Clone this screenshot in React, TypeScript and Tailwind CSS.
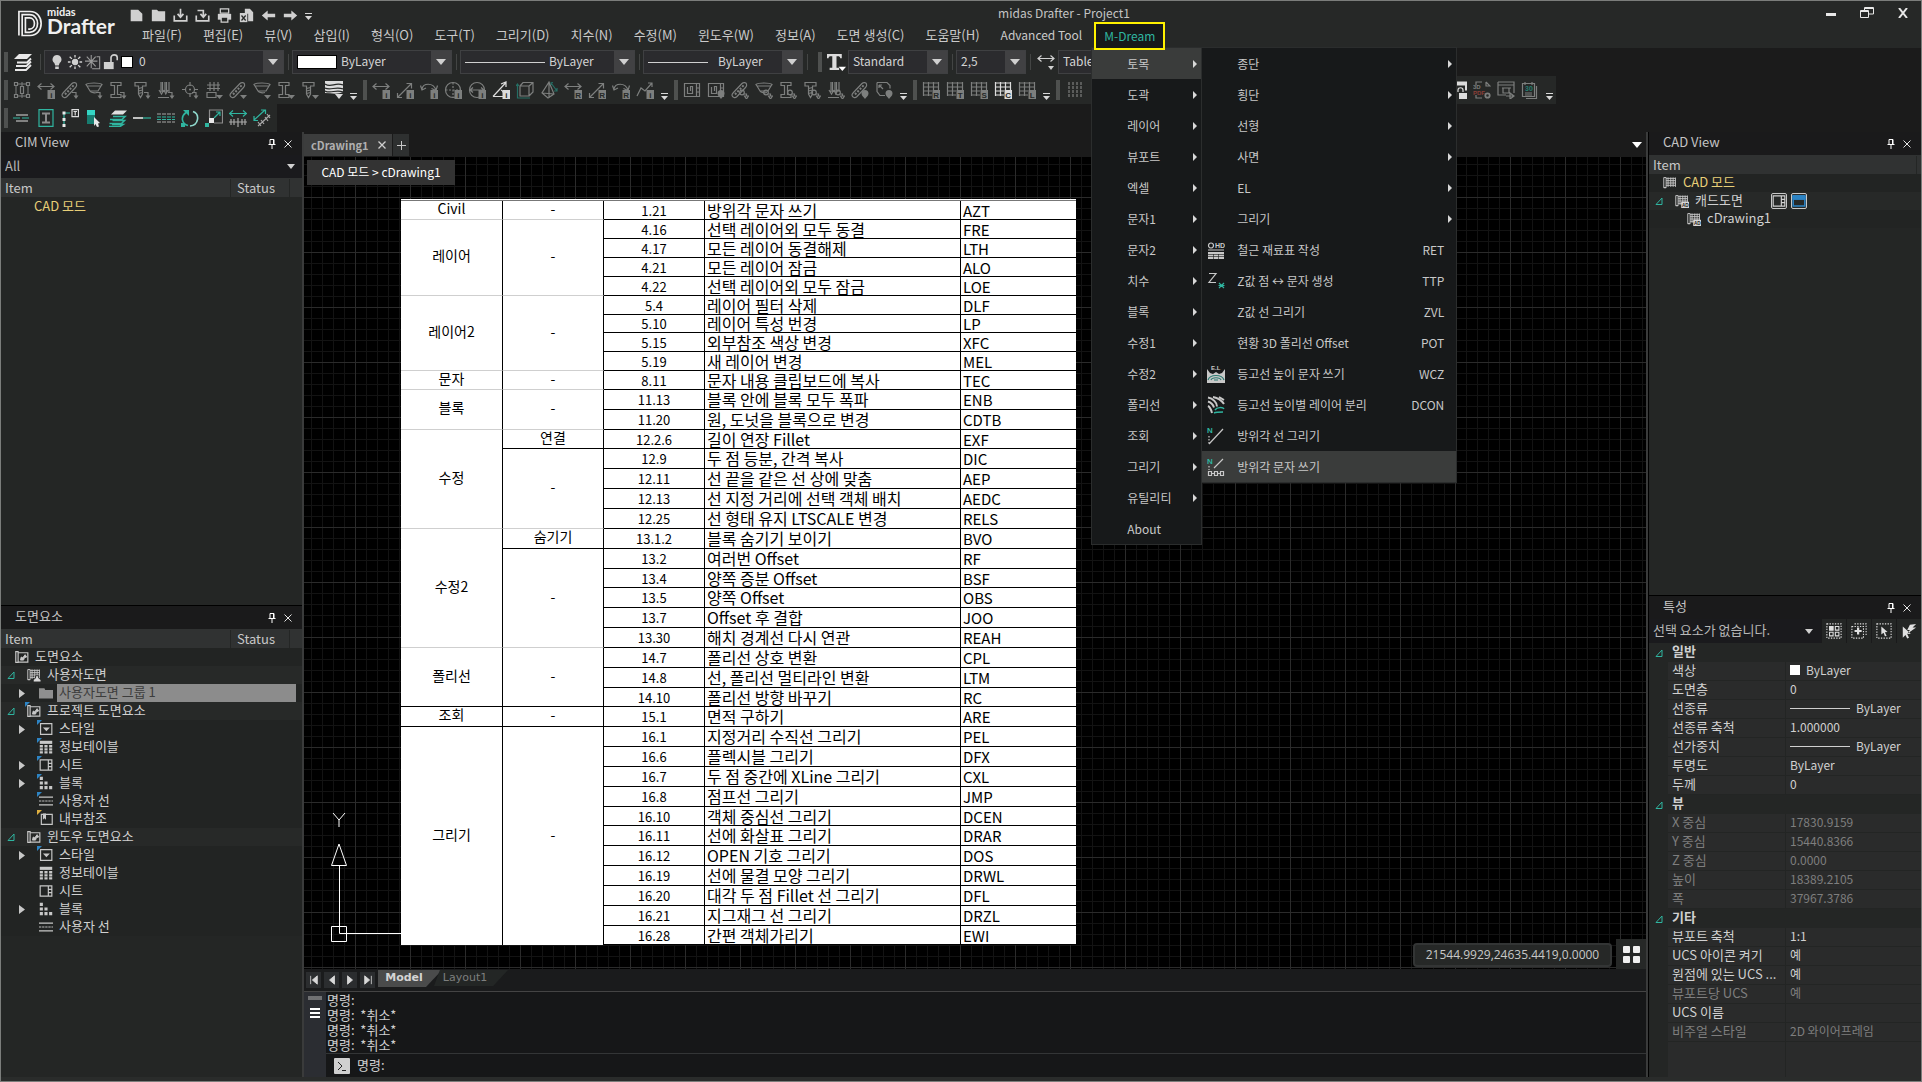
import type { ReactNode } from 'react';
import { clsx } from 'clsx';

/* ---------- icon parts (18 x 18 grid) ---------- */

function Icon({ children, size = 18, className }: { children: ReactNode; size?: number; className?: string }) {
  return (
    <svg
      width={size}
      height={size}
      viewBox="0 0 18 18"
      fill="none"
      stroke="currentColor"
      strokeWidth="1.2"
      className={clsx('shrink-0', className)}
      aria-hidden="true"
    >
      {children}
    </svg>
  );
}

const TEAL = '#2fb5a0';

// modifiers, drawn in the lower right corner
const Turn = () => (
  <g>
    <path d="M11 11.500h4v4" />
    <path d="M12.500 14.500h5l-2.500 3.500z" fill="currentColor" stroke="none" />
  </g>
);
const Tri = () => <path d="M11 14h7l-3.500 4z" fill="currentColor" stroke="none" />;
const Badge = ({ t }: { t: string }) => (
  <g>
    <rect x="10.500" y="9" width="7.500" height="9" fill="currentColor" stroke="none" />
    <text x="14.250" y="16.500" textAnchor="middle" fontSize="8" fontWeight="700" fontFamily="Liberation Sans" fill="#262827" stroke="none">
      {t}
    </text>
  </g>
);
const Drop = () => <path d="M14 18c-1-2-3.500-3-3.500-5.500a3.500 3.500 0 0 1 7 0c0 2.500-2.500 3.500-3.500 5.500z" fill="currentColor" stroke="none" />;
const Ring = () => (
  <g>
    <circle cx="11" cy="11.500" r="2.300" />
    <path d="M13 13h2.500v2.500M13.500 15h4l-2 3z" />
  </g>
);

// bases
const Frame = () => (
  <g>
    <path d="M1 3h16M1 15h16M3 1v16M9 1v16M15 1v16" strokeWidth="1" />
    <path d="M1.500 1.500h3v3h-3zM7.500 5.500h3v7h-3zM13.500 1.500h3v3h-3zM1.500 13.500h3v3h-3zM13.500 13.500h3v3h-3z" fill="#262827" />
  </g>
);
const Dim = () => <path d="M1 5.500h16M4.500 2.500L1 5.500l3.500 3M13.500 2.500l3.500 3-3.500 3" />;
const Diag = () => <path d="M2 16L15 3M10.500 2.500H15.500V7.500M1.500 12v4.500H6" />;
const Arc = () => <path d="M2 8c1-6 11-7 14 1M.5 4.500L2 9l4-2M17.500 4.500L16 9.500l-4.500-2" />;
const Rebar = () => (
  <g>
    <path d="M3 16.500c-2.500-1-2.500-3-1-4.500L11 2.500c1.500-1.500 4-1 4.500.5s0 2.500-1 3.500L6 15.500c-1 1-2 1.500-3 1z" />
    <path d="M4 13.500l9-9.500" strokeDasharray="2 1.500" strokeWidth="2" />
  </g>
);
const Bowl = () => <path d="M1 3.500c2-2 14-2 16 0l-1 1.500H2zM2 5l3 5h8l3-5M5 10c1 2 5 2 7 1.500" />;
const IBeam = () => <path d="M2 1.500h10v3H8.500v9H12v3H2v-3h3.500v-9H2z" />;
const TBeam = () => <path d="M2 1.500h11v3.500H9.500v8L7.500 16.500 5.500 13V5H2zM5.500 7.500l4-1M5.500 10l4-1M5.500 12.500l4-1" />;
const Piles = () => <path d="M4 1v10M8 1v10M12 1v10M5.500 1v10M9.500 1v10M2 9l2.500 4L7 9M7 9l1.800 4L11 9M1 16.500h11" />;
const Target = () => <path d="M9 1v4M9 12v4M1 8.500h4M13 8.500h4M9 4a4.500 4.500 0 1 1 0 9 4.500 4.500 0 0 1 0-9zM9 7.500v2M8 8.500h2" />;
const Mesh = () => <path d="M2 4h13M2 7.500h13M5 1v9M9 1v9M13 1v9M2 11.500h9v5H2z" />;
const Waves = () => (
  <g stroke="none">
    <path d="M0 0h18v11c-6 3-12 1-18 1z" fill="currentColor" />
    <path d="M0 3c6 4 10-2 18 1M0 7c5 3 11-2 18 1M0 10c6 3 11-2 18 1" stroke="#262827" />
  </g>
);
const Disc = ({ dashed }: { dashed?: boolean }) => (
  <g>
    <circle cx="9" cy="9" r="7.500" />
    <path d="M1.500 9h15M9 1.500v15" strokeDasharray={dashed ? '2 1.500' : undefined} />
  </g>
);
const Clip = () => <path d="M1.500 2.500h12v13h-12zM13.500 2.500h3v13h-3M4.500 6v6.500h5v-7h-2v4.500M13.500 7h3M13.500 11h3" />;
const Grid = () => <path d="M1 2h16M1 6h16M1 10h9M1 14h9M1.500 1v14M6.500 1v14M11.500 1v8M16.500 1v8" />;

const libraryIcons: ReactNode[] = [
  <Frame />,
  <><Dim /><Badge t="i" /></>,
  <><Rebar /><Turn /></>,
  <><Bowl /><Turn /></>,
  <><IBeam /><Turn /></>,
  <><TBeam /><Turn /></>,
  <><Piles /><Turn /></>,
  <><Target /><Turn /></>,
  <><Mesh /><Tri /></>,
  <><Rebar /><Tri /></>,
  <><Bowl /><Tri /></>,
  <><IBeam /><Tri /></>,
  <><TBeam /><Tri /></>,
];

const dimensionIcons: { art: ReactNode; lit?: boolean }[] = [
  { art: <><Dim /><Badge t="i" /></> },
  { art: <><Diag /><Badge t="i" /></> },
  { art: <><Arc /><Badge t="i" /></> },
  { art: <><Disc dashed /><Badge t="i" /></> },
  { art: <><circle cx="9" cy="9" r="7.500" /><path d="M2 9h14M5 6.500L2 9l3 2.500M13 6.500L16 9l-3 2.500" /><Badge t="i" /></> },
  { art: <><path d="M1 15.500h15M1 15.500L14 1.500M9 3l5-2v5M9 9c2 1 3 3 3 6" /><Badge t="i" /></>, lit: true },
  { art: <><path d="M4 5h9v10H4zM4 5l3-3.500h10V11l-4 4M13 5l4-3.500" /><path d="M1.500 3v14H14M0 5l1.500-2L3 5" stroke="#256e64" /></> },
  { art: <><path d="M9 1L2 12l6 5 6-4zM9 1v16M2 12l12 1" /><path d="M11 2l6 8M13 1.500l-2 .5.500 2M17 7v3h-3" stroke="#256e64" /></> },
  { art: <><Dim /><Badge t="R" /></> },
  { art: <><Diag /><Badge t="R" /></> },
  { art: <><Arc /><Badge t="R" /></> },
  { art: <><path d="M1 15l4-8 4 3 7-8M12 2h4v4" /><Badge t="i" /></> },
];

const placeIcons: ReactNode[] = [
  <Clip />,
  <><Clip /><Drop /></>,
  <><Rebar /><Ring /></>,
  <><Bowl /><Ring /></>,
  <><IBeam /><Ring /></>,
  <><TBeam /><Ring /></>,
  <><Piles /><Ring /></>,
  <><Rebar /><Drop /></>,
  <><path d="M2 1.500h10l3 3v3M2 1.500v9l3 4h5M4 4l4 4M4 4v3M4 4h3" /><Drop /></>,
];

const editIcons: ReactNode[] = [
  <><path d="M3 6h12M3 12h12" /><path d="M0 9h18" stroke={TEAL} strokeDasharray="7 2" /></>,
  <><path d="M2 .6h14v16.800H2z" stroke={TEAL} /><path d="M5 4.500h8M5 13.500h8M9 4.500v9" strokeWidth="2" stroke="#8c8c8c" /></>,
  <><path d="M3 16V4h6" stroke={TEAL} /><path d="M1.500 2.500h3v3h-3zM1.500 9h3v3h-3zM1.500 15h3v3h-3z" fill="#e8e8e8" stroke="none" /><path d="M11 .6h6.500v7H11zM12.500 2.500h3.500M14.200 2.500v4" /></>,
  <><path d="M2 1h8v5H2z" fill="#34d6c4" stroke="none" /><path d="M2 6h8v9H2z" fill="#177d70" stroke="none" /><path d="M9 8l6 6-2 .5 1 3-2 .5-1.500-3L9 17z" fill="#e8e8e8" stroke="none" /></>,
  <><path d="M6 1.500h12l-4 4H2z" fill="#e0e0e0" stroke="none" /><path d="M4 7.500h12l-3 3H1M3.500 11.500h12l-3 3H.5M3 15.500h11l-3 2H0" stroke={TEAL} strokeWidth="1.600" /></>,
  <><path d="M0 9h10" strokeWidth="1.600" stroke="#e8e8e8" /><path d="M10 9h8" stroke={TEAL} /></>,
  <><path d="M0 5h18M0 13h18" strokeDasharray="4 1" stroke="#a8a8a8" /><path d="M0 8h18M0 10.500h18" stroke={TEAL} strokeDasharray="4 1" /></>,
  <><path d="M5 3.500C-1 8 1 15 7 16.500" stroke={TEAL} strokeWidth="1.600" /><path d="M9 17c9-1 10-12 3-14.500" stroke="#8fd8cc" strokeWidth="1.600" /><path d="M2 1h6v6z" fill={TEAL} stroke="none" /><path d="M0 14h4v4H0z" fill={TEAL} stroke="none" /></>,
  <><path d="M4.500 9V1h13v13H9" stroke="#8c8c8c" /><path d="M9 9l6-6M11 3h4v4" stroke={TEAL} /><path d="M4 9h5v5H4z" fill="#e8e8e8" stroke="none" /><path d="M0 14h4v4H0z" fill={TEAL} stroke="none" /></>,
  <><path d="M0 4.500h18M4 1.500L.5 4.500l3.500 3M14 1.500l3.500 3-3.500 3" stroke={TEAL} /><path d="M0 13h18M2 10v6M5 10v6M9 9v9M13 10v6M16 10v6" stroke="#a8a8a8" /></>,
  <><path d="M1 11L12 1M8 1h4.500v4M1 7v4.500h4" stroke={TEAL} /><path d="M5 17L17 6M5 13l3 4M8 11l3 4M12 8l3 4M14 5l3 4" stroke="#a8a8a8" /></>,
];

/* ---------- small widgets ---------- */

function Grip() {
  return (
    <span className="flex w-[9px] shrink-0 items-center justify-center">
      <span className="h-5 w-1 bg-[radial-gradient(#6b6d6c_0.5px,transparent_1px)] bg-[length:2px_2px]" />
    </span>
  );
}

function More() {
  return (
    <button className="flex w-3.5 shrink-0 items-end justify-center self-stretch pb-1" aria-label="More tools">
      <svg width="7" height="7" viewBox="0 0 7 7" fill="#d8d8d8" aria-hidden="true">
        <path d="M0 0h7v1H0zM0 3h7L3.500 7z" />
      </svg>
    </button>
  );
}

function Tool({ children, lit, label = 'Tool' }: { children: ReactNode; lit?: boolean; label?: string }) {
  return (
    <button
      aria-label={label}
      className={clsx('flex w-6 shrink-0 items-center justify-center', lit ? 'text-[#dcdcdc]' : 'text-[#7d7f7e]')}
    >
      <Icon>{children}</Icon>
    </button>
  );
}

function Caret({ className }: { className?: string }) {
  return (
    <svg width="10" height="6" viewBox="0 0 10 6" className={clsx('shrink-0 fill-[#d0d0d0]', className)} aria-hidden="true">
      <path d="M0 0h10L5 6z" />
    </svg>
  );
}

function Combo({ label, value, lead, className }: { label: string; value: string; lead?: ReactNode; className: string }) {
  return (
    <label className={clsx('flex h-6 shrink-0 items-center border border-[#3f4042] bg-[#2b2b2e]', className)}>
      {lead}
      <select aria-label={label} className="min-w-0 flex-1 appearance-none bg-transparent px-1 pb-0.5 text-xs text-[#d4d4d4] outline-none">
        <option>{value}</option>
      </select>
      <span className="flex h-full w-5 items-center justify-center bg-[#414143]">
        <Caret />
      </span>
    </label>
  );
}

function Separator() {
  return (
    <span className="flex w-2 shrink-0 justify-center py-1">
      <span className="h-4 w-px bg-[#434544]" />
    </span>
  );
}

function PanelTitle({ children }: { children: ReactNode }) {
  return (
    <div className="flex h-[23px] shrink-0 items-center bg-[#1a1a1b] pr-1.5 pl-3.5 text-[13px] leading-4 text-[#c4c4c4]">
      <h2 className="flex-1 pb-1">{children}</h2>
      <button aria-label="Pin" className="flex w-4 justify-center">
        <svg width="8" height="10" viewBox="0 0 8 10" fill="none" stroke="#fff" aria-hidden="true">
          <path d="M2 .5h4v5H2zM5.500 .5v5M.5 5.500h7M4 6v4" />
        </svg>
      </button>
      <button aria-label="Close" className="flex w-4 justify-center">
        <svg width="8" height="8" viewBox="0 0 8 8" stroke="#e4e4e4" aria-hidden="true">
          <path d="M.5 .5l7 7M7.500 .5l-7 7" />
        </svg>
      </button>
    </div>
  );
}

/* ---------- header ---------- */

const menus = [
  '파일(F)', '편집(E)', '뷰(V)', '삽입(I)', '형식(O)', '도구(T)', '그리기(D)', '치수(N)', '수정(M)',
  '윈도우(W)', '정보(A)', '도면 생성(C)', '도움말(H)',
];

const quickIcons: { label: string; art: ReactNode }[] = [
  { label: 'New', art: <path d="M2 2h9l5 5v9H2z" fill="currentColor" stroke="none" /> },
  { label: 'Open', art: <path d="M1 2h6l2 2h8v12H1z" fill="currentColor" stroke="none" /> },
  { label: 'Save', art: <path d="M1.500 9v6.500h15V9M9 1v9M5.500 7L9 11l3.500-4" strokeWidth="2" /> },
  { label: 'Save as', art: <path d="M1.500 9v6.500h15V9M3 3h7v7M6.500 7l3.500 4 3.500-4" strokeWidth="2" /> },
  { label: 'Print', art: <><path d="M4 1h10v5H4z" strokeWidth="1.500" /><path d="M1 7h16v7H1z" fill="currentColor" stroke="none" /><path d="M5 11h8v6H5z" fill="#262827" strokeWidth="1.500" /></> },
  { label: 'Export', art: <><path d="M7 1h6l4 4v11H11V7H7z" fill="currentColor" stroke="none" /><path d="M1 6h9v11H1z" fill="currentColor" stroke="none" /><path d="M3 9l5 6M8 9l-5 6" stroke="#262827" strokeWidth="1.500" /></> },
  { label: 'Undo', art: <path d="M1 9l7-6v4h9v4H8v4z" fill="currentColor" stroke="none" /> },
  { label: 'Redo', art: <path d="M17 9l-7-6v4H1v4h9v4z" fill="currentColor" stroke="none" /> },
];

function Logo() {
  return (
    <div className="flex w-[130px] shrink-0 items-start pt-1.5 pl-[17px]">
      <svg width="25" height="27" viewBox="0 0 27 28" fill="none" stroke="#f0f0f0" strokeWidth="1.800" className="mt-[3px]" aria-hidden="true">
        <path d="M1 27V1h12c16 0 16 26 0 26H4.500V4.500h8c11.500 0 11.500 19 0 19H8V8h4.500c7 0 7 12 0 12H11" />
      </svg>
      <div className="ml-1 flex flex-col font-['Lato',sans-serif] text-[#f0f0f0]">
        <span className="text-[11px] leading-[10px] font-bold">midas</span>
        <span className="text-[21px] leading-[18px] font-bold">Drafter</span>
      </div>
    </div>
  );
}

const mainMenu = ['토목', '도곽', '레이어', '뷰포트', '엑셀', '문자1', '문자2', '치수', '블록', '수정1', '수정2', '폴리선', '조회', '그리기', '유틸리티', 'About'];

const northMark = (
  <text x="0" y="6" fontSize="8" fontWeight="700" fontFamily="Liberation Sans" fill={TEAL} stroke="none">N</text>
);

const subMenu: { text: string; key?: string; icon?: ReactNode; sub?: boolean }[] = [
  { text: '종단', sub: true },
  { text: '횡단', sub: true },
  { text: '선형', sub: true },
  { text: '사면', sub: true },
  { text: 'EL', sub: true },
  { text: '그리기', sub: true },
  {
    text: '철근 재료표 작성',
    key: 'RET',
    icon: (
      <>
        <circle cx="4" cy="4.500" r="2.500" />
        <text x="8" y="7" fontSize="7" fontWeight="700" fontFamily="Liberation Sans" fill="currentColor" stroke="none">HD</text>
        <path d="M1 9h16" strokeWidth="1" />
        <path d="M1 11h16v7H1z" fill="currentColor" stroke="none" />
        <path d="M1 13.500h16M1 15.500h16M6.500 13v5M11.500 13v5" stroke="#17191a" strokeWidth=".6" />
      </>
    ),
  },
  { text: 'Z값 점 ↔ 문자 생성', key: 'TTP', icon: <><path d="M2 1.500h7L2 10.500h7" /><path d="M12 11l5 5M17 11l-5 5M11.500 13.500h6" stroke={TEAL} /></> },
  { text: 'Z값 선 그리기', key: 'ZVL' },
  { text: '현황 3D 폴리선 Offset', key: 'POT' },
  {
    text: '등고선 높이 문자 쓰기',
    key: 'WCZ',
    icon: (
      <>
        <text x="4" y="5" fontSize="6" fontWeight="700" fontFamily="Liberation Sans" fill="currentColor" stroke="none">E.L</text>
        <path d="M0 4l3 4 3 1 3-2 3 2 3-1 3-4v14H0z" fill="currentColor" stroke="none" />
        <path d="M1 15c2-6 14-6 16 0M4 15c1-3 9-3 10 0M7 15h4" stroke="#2b7a70" />
      </>
    ),
  },
  {
    text: '등고선 높이별 레이어 분리',
    key: 'DCON',
    icon: (
      <>
        <path d="M1 1.500c5 1 9 5 9 9M1 5.500c3 1 5 3 6 6M1 10c2 1 3 3 4 7M6 1c5 1 9 4 11 7M12 1l5 3" strokeWidth="2" />
        <path d="M8 14c2-3 8-3 9-1M7 17c2-1 7-1 9-1" stroke={TEAL} strokeWidth="1.500" />
      </>
    ),
  },
  { text: '방위각 선 그리기', icon: <>{northMark}<path d="M2 9v8" strokeDasharray="1.500 1.500" /><path d="M2 17L16 2" /></> },
  { text: '방위각 문자 쓰기', icon: <>{northMark}<path d="M2 8v4" strokeDasharray="1.500 1.500" /><path d="M7 10l9-9M1.500 13.500h3v4h-3zM7.500 13.500h3v4h-3zM13.500 13.500h3v4h-3zM4.500 15.500h3M10.500 15.500h3" /></> },
];

function SubArrow() {
  return (
    <svg width="4" height="8" viewBox="0 0 4 8" fill="#d8d8d8" aria-hidden="true">
      <path d="M0 0l4 4-4 4z" />
    </svg>
  );
}

function DreamMenu() {
  return (
    <div className="relative ml-0.5">
      <button className="relative z-20 flex h-7 w-[71px] items-center justify-center border-2 border-[#fff100] bg-[#17191a] text-xs text-[#2fb5a0]">
        M-Dream
      </button>
      <div className="absolute top-[25px] left-[-3px] z-10 w-[111px] border border-[#2b2d2d] bg-[#17191a] text-xs text-[#c8c8c8]">
        <ul>
          {mainMenu.map((m, i) => (
            <li key={m}>
              <button className={clsx('flex h-[31px] w-full items-center pr-1 pl-[35px] text-left', i === 0 && 'bg-[#3a3c3b]')}>
                <span className="flex-1">{m}</span>
                {m !== 'About' && <SubArrow />}
              </button>
            </li>
          ))}
        </ul>
        <ul className="absolute -top-px left-full w-[256px] border border-[#2b2d2d] bg-[#17191a]">
          {subMenu.map((m, i) => (
            <li key={m.text}>
              <button className={clsx('flex h-[31px] w-full items-center pr-1 text-left', i === subMenu.length - 1 && 'bg-[#3a3c3b]')}>
                <span className="flex w-[35px] shrink-0 pl-[5px]">{m.icon && <Icon>{m.icon}</Icon>}</span>
                <span className="flex-1">{m.text}</span>
                {m.key && <span className="pr-2">{m.key}</span>}
                {m.sub && <SubArrow />}
              </button>
            </li>
          ))}
        </ul>
      </div>
    </div>
  );
}

function Header() {
  return (
    <header className="flex h-[47px] shrink-0 bg-[#262827]">
      <Logo />
      <div className="flex min-w-0 flex-1 flex-col">
        <div className="flex h-[23px] items-center">
          <div className="-ml-1.5 flex items-center self-stretch text-[#d0d0d0]">
            {quickIcons.map((q) => (
              <button key={q.label} aria-label={q.label} className="flex w-[22px] justify-center pt-1.5">
                <Icon size={15}>{q.art}</Icon>
              </button>
            ))}
            <More />
          </div>
          <h1 className="flex-1 text-center text-xs text-[#c4c4c4]">midas Drafter - Project1</h1>
          <div className="flex text-[#e8e8e8]">
            <button aria-label="Minimize" className="flex w-9 items-center justify-center">
              <svg width="10" height="10" viewBox="0 0 10 10" aria-hidden="true"><path d="M0 5h10v3H0z" fill="currentColor" /></svg>
            </button>
            <button aria-label="Restore" className="flex w-9 items-center justify-center">
              <svg width="14" height="11" viewBox="0 0 14 11" fill="none" stroke="currentColor" aria-hidden="true">
                <path d="M.5 3.500h8v7h-8zM.5 4.500h8M4.500 3V.5h9v6.500H9M4.500 1.500h9" />
              </svg>
            </button>
            <button aria-label="Close" className="flex w-9 items-center justify-center">
              <svg width="10" height="10" viewBox="0 0 10 10" stroke="currentColor" strokeWidth="2" aria-hidden="true"><path d="M1 0l8 10M9 0L1 10" /></svg>
            </button>
          </div>
        </div>
        <nav className="flex h-6 items-center text-[13px] leading-4 text-[#cacaca]">
          {menus.map((m) => (
            <button key={m} className="pr-2.5 pb-0.5 pl-[11px] whitespace-nowrap">
              {m}
            </button>
          ))}
          <button className="pr-2.5 pb-0.5 pl-[11px] text-xs whitespace-nowrap">Advanced Tool</button>
          <DreamMenu />
        </nav>
      </div>
    </header>
  );
}

/* ---------- toolbars ---------- */

function PropertyBar() {
  return (
    <div className="flex h-7 w-fit items-center bg-[#262827]">
      <Grip />
      <button aria-label="Layers" className="mx-px flex w-6 justify-center text-[#e8e8e8]">
        <Icon>
          <path d="M5 1h13l-5 5H0z" fill="currentColor" stroke="none" />
          <path d="M3 9.500h10l4-4M2 13h10.500l4.500-4.500M1 17h11l5-5" strokeWidth="1.800" />
        </Icon>
      </button>
      <Separator />
      <Combo
        label="Layer"
        value="0"
        className="w-60"
        lead={
          <span className="flex items-center gap-0.5 pl-1 text-[#d0d0d0]">
            <Icon size={16}><path d="M9 1a5 5 0 0 1 3 9l-1 3H7l-1-3a5 5 0 0 1 3-9zM7 14h4v3H7z" fill="currentColor" stroke="none" /></Icon>
            <Icon size={16}><circle cx="9" cy="9" r="3" fill="currentColor" /><path d="M9 1v3M9 14v3M1 9h3M14 9h3M3 3l2.500 2.500M12.500 12.500L15 15M3 15l2.500-2.500M12.500 5.500L15 3" strokeWidth="1.500" /></Icon>
            <Icon size={16} className="text-[#9a9a9a]"><path d="M7 1v15M0 8h14M2 3l10 11M12 3L2 14M13 3h3.500v13.500H8" /></Icon>
            <Icon size={16}><path d="M1 9h11v8H1z" fill="currentColor" stroke="none" /><path d="M9 9V4c0-4 7-4 7 0v3" strokeWidth="1.800" /></Icon>
            <span className="mr-0.5 h-3 w-3 border border-black bg-white" />
          </span>
        }
      />
      <Separator />
      <Combo label="Color" value="ByLayer" className="w-40" lead={<span className="ml-1 h-3.5 w-10 border border-black bg-white" />} />
      <Separator />
      <Combo label="Linetype" value="ByLayer" className="w-[175px]" lead={<span className="ml-1 h-px w-20 bg-[#d0d0d0]" />} />
      <Separator />
      <Combo label="Lineweight" value="ByLayer" className="w-40" lead={<span className="mr-1.5 ml-1 h-px w-[60px] bg-[#d0d0d0]" />} />
      <Separator />
      <span className="w-1" />
      <Grip />
      <button aria-label="Text style" className="flex w-6 justify-center text-[#dcdcdc]">
        <Icon size={19}>
          <path d="M0 1h14v4h-1.500c0-1.500-1-2-2-2H9v11h2.500v2h-9v-2H5V3H3.500c-1 0-2 .5-2 2H0z" fill="currentColor" stroke="none" />
          <path d="M11 13h7l-3.500 4z" fill="#fff" stroke="none" />
        </Icon>
      </button>
      <Combo label="Text style" value="Standard" className="w-[100px]" />
      <Separator />
      <Combo label="Text height" value="2,5" className="w-[70px]" />
      <Separator />
      <button aria-label="Dimension style" className="flex w-6 justify-center text-[#d0d0d0]">
        <Icon><Dim /><path d="M11 13h6l-3 4z" fill="currentColor" stroke="none" /></Icon>
      </button>
      <Combo label="Dimension style" value="Table" className="w-[120px]" />
    </div>
  );
}

function LibraryBar() {
  return (
    <div className="flex h-7 w-fit bg-[#262827]">
      <Grip />
      {libraryIcons.map((art, i) => (
        <Tool key={i}>{art}</Tool>
      ))}
      <Tool lit><Waves /><path d="M10 13h8l-4 5z" fill="currentColor" stroke="none" /></Tool>
      <More />
      <Grip />
      {dimensionIcons.map((d, i) => (
        <Tool key={i} lit={d.lit}>{d.art}</Tool>
      ))}
      <More />
      <Grip />
      {placeIcons.map((art, i) => (
        <Tool key={i}>{art}</Tool>
      ))}
      <More />
      <Grip />
      {['R', 'T', 'S', 'C', 'L'].map((t) => (
        <Tool key={t} lit={t === 'C'}><Grid /><Badge t={t} /></Tool>
      ))}
      <More />
      <Grip />
      <Tool><path d="M4 1v16M8 1v16M12 1v16M16 1v16" strokeDasharray="3 1" /></Tool>
      <span className="w-90" />
      <Tool lit><path d="M3 1.500h14v8M3 3.500h14" strokeWidth="2" /><path d="M9 11V9c0-3 5-3 5 0v2" /><path d="M10 12h8v6h-8z" fill="currentColor" stroke="none" /></Tool>
      <Tool>
        <path d="M3 4V1h6M13 1l4 4h-4V1M3 14v3h6" />
        <text x="0" y="8" fontSize="6" fontWeight="700" fontFamily="Liberation Sans" fill="currentColor" stroke="none">3D</text>
        <text x="0" y="13.500" fontSize="6" fontWeight="700" fontFamily="Liberation Sans" fill="#8a3f38" stroke="none">PDF</text>
        <circle cx="14.500" cy="14.500" r="2.200" strokeWidth="1.800" />
      </Tool>
      <Tool><path d="M1 1h16v11M1 1v13h8M1 4h16M5 7h9M6 7v5h6V7M9 15h7M13 12l4 3-4 3z" /></Tool>
      <Tool>
        <path d="M1.500 2.500h12v13h-12zM4 1v3M11 1v3M15.500 5v12.500H5M4 12h7M4 14h7" />
        <text x="4" y="10" fontSize="7" fontWeight="700" fontFamily="Liberation Sans" fill="#267d71" stroke="none">30</text>
      </Tool>
      <More />
    </div>
  );
}

function EditBar() {
  return (
    <div className="flex h-7 w-[276px] bg-[#262827]">
      <Grip />
      {editIcons.map((art, i) => (
        <Tool key={i} lit>{art}</Tool>
      ))}
    </div>
  );
}

/* ---------- trees ---------- */

type Glyph = 'element' | 'plan' | 'user' | 'folder' | 'style' | 'table' | 'sheet' | 'block' | 'lines' | 'xref' | 'cad';

const planArt = <path d="M1 2h3v13H1zM4 3h12M4 6h12M4 9h12M4 12h12M6.500 2v12M10 2v12M13 2v12M16 2v12M1 15h3" />;

const glyphs: Record<Glyph, ReactNode> = {
  element: <><path d="M1 2h3v14H1zM4 3.500h12.500v12H4" strokeWidth="1.500" /><path d="M7 13l1-4 2 1 3-4 2 3-3 1-1 3z" fill="currentColor" /></>,
  plan: planArt,
  user: <>{planArt}<path d="M11 10h4v3l3 2v3H8v-3l3-2z" fill="#d8d8d8" stroke="#242625" /></>,
  folder: <path d="M0 3h7l1 2h10v11H0z" fill="#8f8f8f" stroke="none" />,
  style: <><path d="M2 2h14.500v14H2z" strokeWidth="1.500" /><path d="M5 7h9l-4.500 5z" fill="currentColor" stroke="none" /></>,
  table: <><path d="M1 1h16v4H1z" fill="currentColor" stroke="none" /><path d="M1 8h16M1 12h16M1 16h16" strokeWidth="3" strokeDasharray="4 2" /></>,
  sheet: <path d="M1.500 2.500h15v13h-15zM12 2.500v13M12 7h4.500M12 11h4.500" strokeWidth="1.500" />,
  block: <path d="M1 1h4v4H1zM1 7h4v4H1zM7 7h4v4H7zM1 13h4v4H1zM7 13h4v4H7zM13 13h4v4h-4z" fill="currentColor" stroke="none" />,
  lines: <><path d="M0 4h18M0 14h18" strokeWidth="1.500" /><path d="M0 9h18" strokeDasharray="3 1" /></>,
  xref: <><path d="M3 3h14v13H3z" strokeWidth="1.500" /><path d="M5 2h4v8L7 8l-2 2z" fill="currentColor" stroke="none" /></>,
  cad: (
    <>
      {planArt}
      <path d="M8 10h10v8H8z" fill="#d8d8d8" stroke="none" />
      <text x="9" y="16.500" fontSize="6" fontWeight="700" fontFamily="Liberation Sans" fill="#222" stroke="none">AD</text>
    </>
  ),
};

type Node = { text: string; glyph: Glyph; level: number; state?: 'open' | 'closed'; flag?: 'blue' | 'yellow'; selected?: boolean; extra?: boolean; gold?: boolean };

const elements: Node[] = [
  { text: '도면요소', glyph: 'element', level: 0 },
  { text: '사용자도면', glyph: 'user', level: 1, state: 'open' },
  { text: '사용자도면 그룹 1', glyph: 'folder', level: 2, state: 'closed', selected: true },
  { text: '프로젝트 도면요소', glyph: 'element', level: 1, state: 'open', flag: 'blue' },
  { text: '스타일', glyph: 'style', level: 2, state: 'closed', flag: 'blue' },
  { text: '정보테이블', glyph: 'table', level: 2, flag: 'blue' },
  { text: '시트', glyph: 'sheet', level: 2, state: 'closed', flag: 'blue' },
  { text: '블록', glyph: 'block', level: 2, state: 'closed', flag: 'blue' },
  { text: '사용자 선', glyph: 'lines', level: 2, flag: 'blue' },
  { text: '내부참조', glyph: 'xref', level: 2, flag: 'yellow' },
  { text: '윈도우 도면요소', glyph: 'element', level: 1, state: 'open' },
  { text: '스타일', glyph: 'style', level: 2, state: 'closed', flag: 'blue' },
  { text: '정보테이블', glyph: 'table', level: 2 },
  { text: '시트', glyph: 'sheet', level: 2 },
  { text: '블록', glyph: 'block', level: 2, state: 'closed' },
  { text: '사용자 선', glyph: 'lines', level: 2 },
];

const cadNodes: Node[] = [
  { text: 'CAD 모드', glyph: 'plan', level: 0, gold: true },
  { text: '캐드도면', glyph: 'cad', level: 1, state: 'open', extra: true },
  { text: 'cDrawing1', glyph: 'cad', level: 2 },
];

function OpenMark() {
  return (
    <svg width="8" height="8" viewBox="0 0 8 8" fill="none" stroke={TEAL} aria-hidden="true">
      <path d="M1 7.500h6V1z" />
    </svg>
  );
}

function Tree({ nodes }: { nodes: Node[] }) {
  return (
    <ul className="text-[13px] leading-4 text-[#d0d0d0]">
      {nodes.map((n, i) => (
        <li key={i} className={clsx('flex h-[18px] items-center pr-1.5', n.level === 1 ? 'bg-[#272928]' : 'bg-[#222423]')}>
          <span className={clsx('flex shrink-0 justify-end pr-3', n.level === 0 && 'w-[14px]', n.level === 1 && 'w-[26px]', n.level === 2 && 'w-[38px]')}>
            {n.state === 'open' && <OpenMark />}
            {n.state === 'closed' && (
              <svg width="6" height="9" viewBox="0 0 6 9" fill="#c8c8c8" className="mr-0.5" aria-hidden="true">
                <path d="M0 0l6 4.500L0 9z" />
              </svg>
            )}
          </span>
          <span className="relative flex w-[18px] shrink-0">
            <Icon size={14} className="text-[#c8c8c8]">{glyphs[n.glyph]}</Icon>
            {n.flag && (
              <svg width="5" height="5" viewBox="0 0 5 5" className={clsx('absolute -top-0.5 -left-0.5', n.flag === 'blue' ? 'fill-[#2d84c4]' : 'fill-[#e0b040]')} aria-hidden="true">
                <path d="M0 0h5L0 5z" />
              </svg>
            )}
          </span>
          <span className={clsx('pb-0.5 pl-0.5', n.selected && 'flex-1 bg-[#8c8c8c] text-[#3c3c3c]', n.gold && 'text-[#e8cf78]')}>{n.text}</span>
          {n.extra && (
            <span className="ml-7 flex gap-1">
              <button aria-label="Sheet" className="rounded-xs border border-[#c8c8c8] text-[#d0d0d0]"><Icon size={14}>{glyphs.sheet}</Icon></button>
              <button aria-label="Window" className="rounded-xs border border-[#c8c8c8] text-[#2d84c4]">
                <Icon size={14}><path d="M1.500 2.500h15v13h-15z" strokeWidth="2" /><path d="M1 2h16v5H1z" fill="currentColor" /></Icon>
              </button>
            </span>
          )}
        </li>
      ))}
    </ul>
  );
}

function ColumnHead({ status }: { status?: boolean }) {
  return (
    <div className="flex h-[19px] shrink-0 items-center bg-[#303232] text-[13px] leading-[18px] text-[#c8c8c8]">
      <span className="flex-1 border-r border-[#242625] pl-1">Item</span>
      {status && <span className="w-[59px] border-r border-[#242625] pl-1.5">Status</span>}
      <span className={status ? 'w-3' : 'w-1'} />
    </div>
  );
}

function LeftDock() {
  return (
    <aside className="flex w-[301px] shrink-0 flex-col bg-[#242625]">
      <section className="flex h-[473px] flex-col">
        <PanelTitle>CIM View</PanelTitle>
        <label className="flex h-[23px] shrink-0 items-center bg-[#1a1a1d] pr-[7px] pl-1">
          <select aria-label="Filter" className="flex-1 appearance-none bg-transparent pb-0.5 text-[13px] leading-4 text-[#b4b4b4] outline-none">
            <option>All</option>
          </select>
          <Caret className="h-[5px] w-2" />
        </label>
        <ColumnHead status />
        <div className="pl-[33px] text-[13px] leading-[18px] text-[#e8cf78]">CAD 모드</div>
      </section>
      <section className="flex min-h-0 flex-1 flex-col border-t border-black">
        <PanelTitle>도면요소</PanelTitle>
        <ColumnHead status />
        <Tree nodes={elements} />
      </section>
    </aside>
  );
}

/* ---------- drawing ---------- */

type Row = [no: string, name: string, code: string];
type Group = { name: string; dark?: boolean; parts: { label: string; rows: Row[] }[] };

const groups: Group[] = [
  { name: 'Civil', parts: [{ label: '-', rows: [['1.21', '방위각 문자 쓰기', 'AZT']] }] },
  {
    name: '레이어',
    parts: [{ label: '-', rows: [['4.16', '선택 레이어외 모두 동결', 'FRE'], ['4.17', '모든 레이어 동결해제', 'LTH'], ['4.21', '모든 레이어 잠금', 'ALO'], ['4.22', '선택 레이어외 모두 잠금', 'LOE']] }],
  },
  {
    name: '레이어2',
    parts: [{ label: '-', rows: [['5.4', '레이어 필터 삭제', 'DLF'], ['5.10', '레이어 특성 번경', 'LP'], ['5.15', '외부참조 색상 변경', 'XFC'], ['5.19', '새 레이어 변경', 'MEL']] }],
  },
  { name: '문자', parts: [{ label: '-', rows: [['8.11', '문자 내용 클립보드에 복사', 'TEC']] }] },
  { name: '블록', parts: [{ label: '-', rows: [['11.13', '블록 안에 블록 모두 폭파', 'ENB'], ['11.20', '원, 도넛을 블록으로 변경', 'CDTB']] }] },
  {
    name: '수정',
    parts: [
      { label: '연결', rows: [['12.2.6', '길이 연장 Fillet', 'EXF']] },
      { label: '-', rows: [['12.9', '두 점 등분, 간격 복사', 'DIC'], ['12.11', '선 끝을 같은 선 상에 맞춤', 'AEP'], ['12.13', '선 지정 거리에 선택 객체 배치', 'AEDC'], ['12.25', '선 형태 유지 LTSCALE 변경', 'RELS']] },
    ],
  },
  {
    name: '수정2',
    parts: [
      { label: '숨기기', rows: [['13.1.2', '블록 숨기기 보이기', 'BVO']] },
      { label: '-', rows: [['13.2', '여러번 Offset', 'RF'], ['13.4', '양쪽 증분 Offset', 'BSF'], ['13.5', '양쪽 Offset', 'OBS'], ['13.7', 'Offset 후 결합', 'JOO'], ['13.30', '해치 경계선 다시 연관', 'REAH']] },
    ],
  },
  { name: '폴리선', dark: true, parts: [{ label: '-', rows: [['14.7', '폴리선 상호 변환', 'CPL'], ['14.8', '선, 폴리선 멀티라인 변환', 'LTM'], ['14.10', '폴리선 방향 바꾸기', 'RC']] }] },
  { name: '조회', dark: true, parts: [{ label: '-', rows: [['15.1', '면적 구하기', 'ARE']] }] },
  {
    name: '그리기',
    parts: [
      {
        label: '-',
        rows: [
          ['16.1', '지정거리 수직선 그리기', 'PEL'], ['16.6', '플렉시블 그리기', 'DFX'], ['16.7', '두 점 중간에 XLine 그리기', 'CXL'], ['16.8', '점프선 그리기', 'JMP'],
          ['16.10', '객체 중심선 그리기', 'DCEN'], ['16.11', '선에 화살표 그리기', 'DRAR'], ['16.12', 'OPEN 기호 그리기', 'DOS'], ['16.19', '선에 물결 모양 그리기', 'DRWL'],
          ['16.20', '대각 두 점 Fillet 선 그리기', 'DFL'], ['16.21', '지그재그 선 그리기', 'DRZL'], ['16.28', '간편 객체가리기', 'EWI'],
        ],
      },
    ],
  },
];

// rows that are a pixel lower than the usual 20
const shortRows = new Set(['1.21', '4.16', '4.17', '4.21', '4.22', '5.4', '5.15', '5.19', '8.11', '12.2.6', '13.4', '14.10', '16.10', '16.28']);

function rowHeight(no: string) {
  if (no === '5.10') return 'h-[18px]';
  return shortRows.has(no) ? 'h-[19px]' : 'h-5';
}

function CommandTable() {
  const cell = 'border-b border-black p-0';
  const merged = 'border-r border-r-black p-0 pb-1 text-center text-sm leading-[13px]';
  return (
    <div className="absolute top-[42px] left-[97px] w-[675px] bg-white pt-px">
      <table className="w-full table-fixed border-separate border-spacing-0 border-t border-[#777] text-black">
        <colgroup>
          <col className="w-[102px]" />
          <col className="w-[101px]" />
          <col className="w-[101px]" />
          <col className="w-[256px]" />
          <col />
        </colgroup>
        <tbody>
          {groups.map((g) => {
            const total = g.parts.reduce((n, p) => n + p.rows.length, 0);
            return g.parts.map((p, pi) =>
              p.rows.map(([no, name, code], ri) => {
                const lastPart = pi === g.parts.length - 1;
                const edge = g.name === '그리기' ? 'border-b-0' : g.dark ? 'border-b border-b-black' : 'border-b border-b-[#cfcfcf]';
                return (
                  <tr key={no} className={rowHeight(no)}>
                    {pi === 0 && ri === 0 && (
                      <td rowSpan={total} className={clsx(merged, edge)}>{g.name}</td>
                    )}
                    {ri === 0 && (
                      <td rowSpan={p.rows.length} className={clsx(merged, lastPart ? edge : 'border-b border-b-black')}>
                        {p.label}
                      </td>
                    )}
                    <td className={clsx(cell, 'border-r text-center text-[13px] leading-[17px]')}>{no}</td>
                    <td className={clsx(cell, 'border-r pl-0.5 text-base leading-[17px] whitespace-nowrap')}>{name}</td>
                    <td className={clsx(cell, 'pl-0.5 text-[15px] leading-[17px]')}>{code}</td>
                  </tr>
                );
              }),
            );
          })}
        </tbody>
      </table>
    </div>
  );
}

function Canvas() {
  return (
    <div className="relative min-h-0 flex-1 overflow-hidden bg-black bg-[image:linear-gradient(to_right,#2b2b2b_1px,transparent_1px),linear-gradient(to_bottom,#2b2b2b_1px,transparent_1px),linear-gradient(to_right,#131313_1px,transparent_1px),linear-gradient(to_bottom,#131313_1px,transparent_1px)] bg-[length:55px_55px,55px_55px,11px_11px,11px_11px] bg-[position:51px_40px,51px_40px,7px_7px,7px_7px]">
      <div className="absolute top-[3px] left-[3px] flex h-[25px] w-[148px] items-center justify-center bg-[#333] pb-0.5 text-xs text-white">
        CAD 모드 &gt; cDrawing1
      </div>
      {/* UCS mark */}
      <svg width="72" height="134" viewBox="0 0 72 134" fill="none" stroke="#fff" className="absolute bottom-[27px] left-[26px]" aria-hidden="true">
        <path d="M3 5l6 7 6-7M9 12v7" />
        <path d="M9 36L1.500 57.500h15zM9.500 58v67.500H72M1.500 118.500h15v15h-15z" />
      </svg>
      <CommandTable />
      <div className="absolute right-0 bottom-0 flex items-end gap-1">
        <output className="mb-0.5 flex h-6 w-[199px] items-center justify-center rounded-sm border-2 border-[#333535] bg-[#262827] font-['Open_Sans',sans-serif] text-xs text-[#c8c8c8]">
          21544.9929,24635.4419,0.0000
        </output>
        <button aria-label="Views" className="flex h-[30px] w-[30px] items-center justify-center bg-[#262827]">
          <svg width="17" height="17" viewBox="0 0 17 17" fill="#f0f0f0" aria-hidden="true">
            <rect width="7" height="7" rx="1" /><rect x="10" width="7" height="7" rx="1" />
            <rect y="10" width="7" height="7" rx="1" /><rect x="10" y="10" width="7" height="7" rx="1" />
          </svg>
        </button>
      </div>
    </div>
  );
}

const navArt = ['M2 1v10M10 1L4 6l6 5z', 'M9 1L3 6l6 5z', 'M3 1l6 5-6 5z', 'M10 1v10M2 1l6 5-6 5z'];
const navLabels = ['First', 'Previous', 'Next', 'Last'];

function Workspace() {
  return (
    <main className="flex min-w-0 flex-1 flex-col border-x-2 border-[#3a3b3b] bg-[#1a1b1c]">
      <div className="flex h-[25px] shrink-0 items-end bg-[#1b1b1b] pb-px">
        <div className="mr-px flex h-[22px] w-[88px] items-center bg-[#3c3d3d] pl-[7px] text-[11px] font-bold text-[#b0b0b0]">
          <button className="flex-1 text-left">cDrawing1</button>
          <button aria-label="Close tab" className="flex w-5 justify-center">
            <svg width="8" height="8" viewBox="0 0 8 8" stroke="#d0d0d0" strokeWidth="1.300" aria-hidden="true"><path d="M.5 .5l7 7M7.500 .5l-7 7" /></svg>
          </button>
        </div>
        <button aria-label="New tab" className="flex h-[22px] w-4 items-center justify-center bg-[#2e3030]">
          <svg width="9" height="9" viewBox="0 0 9 9" stroke="#c8c8c8" aria-hidden="true"><path d="M4.500 0v9M0 4.500h9" /></svg>
        </button>
        <button aria-label="Tab list" className="mr-1 mb-2 ml-auto"><Caret className="fill-white" /></button>
      </div>
      <Canvas />
      <div className="flex h-[23px] shrink-0 border-b border-[#444] bg-[#1a1b1c] pt-px">
        <div className="flex gap-[3px] pt-0.5 pr-[3px] pl-0.5">
          {navArt.map((d, i) => (
            <button key={d} aria-label={navLabels[i]} className="flex h-4 w-[15px] items-center justify-center bg-[#2b2d2f]">
              <svg width="10" height="10" viewBox="0 0 12 12" fill="#d8d8d8" stroke="#d8d8d8" strokeWidth="1" aria-hidden="true">
                <path d={d} />
              </svg>
            </button>
          ))}
        </div>
        <button className="h-[17px] w-16 bg-[#4a4b4b] pr-3 font-['DejaVu_Sans',sans-serif] text-[11px] font-bold text-[#d4d4d4] [clip-path:polygon(0_0,100%_0,75%_100%,0_100%)]">Model</button>
        <button className="-ml-2 h-4 w-[74px] bg-[#232625] pr-3 font-['DejaVu_Sans',sans-serif] text-[11px] text-[#7d7f7e] [clip-path:polygon(8%_0,100%_0,80%_100%,0_100%)]">Layout1</button>
      </div>
      <div className="flex h-[85px] shrink-0 bg-[#161718] text-[13px] text-[#d0d0d0]">
        <div className="flex w-[22px] flex-col items-center bg-[#2b2d32] pt-1">
          <span className="h-1 w-3.5 bg-[radial-gradient(#a0a0a0_0.5px,transparent_1px)] bg-[length:2px_2px]" />
          <button aria-label="Command menu" className="mt-2">
            <svg width="10" height="10" viewBox="0 0 10 10" fill="#fff" aria-hidden="true"><path d="M0 0h10v2H0zM0 4h10v2H0zM0 8h10v2H0z" /></svg>
          </button>
        </div>
        <div className="flex flex-1 flex-col">
          <div className="flex-1 pl-px leading-[15px]">
            <p>명령:</p>
            <p>명령: &nbsp;*취소*</p>
            <p>명령: &nbsp;*취소*</p>
            <p>명령: &nbsp;*취소*</p>
          </div>
          <label className="flex h-6 items-center border-t border-[#333536] pl-2">
            <svg width="16" height="16" viewBox="0 0 16 16" className="mr-[7px]" aria-hidden="true">
              <rect width="16" height="16" rx="1" fill="#d0d0d0" />
              <path d="M4 4l4 4-4 4M8 12.500h4" fill="none" stroke="#222" />
            </svg>
            <span className="pb-0.5">명령:</span>
            <input aria-label="Command" className="flex-1 bg-transparent pl-1 outline-none" />
          </label>
        </div>
      </div>
    </main>
  );
}

/* ---------- properties ---------- */

type Prop = { label: string; value?: string; head?: boolean; off?: boolean; mark?: 'swatch' | 'line' };

const props: Prop[] = [
  { label: '일반', head: true },
  { label: '색상', value: 'ByLayer', mark: 'swatch' },
  { label: '도면층', value: '0' },
  { label: '선종류', value: 'ByLayer', mark: 'line' },
  { label: '선종류 축척', value: '1.000000' },
  { label: '선가중치', value: 'ByLayer', mark: 'line' },
  { label: '투명도', value: 'ByLayer' },
  { label: '두께', value: '0' },
  { label: '뷰', head: true },
  { label: 'X 중심', value: '17830.9159', off: true },
  { label: 'Y 중심', value: '15440.8366', off: true },
  { label: 'Z 중심', value: '0.0000', off: true },
  { label: '높이', value: '18389.2105', off: true },
  { label: '폭', value: '37967.3786', off: true },
  { label: '기타', head: true },
  { label: '뷰포트 축척', value: '1:1' },
  { label: 'UCS 아이콘 켜기', value: '예' },
  { label: '원점에 있는 UCS ...', value: '예' },
  { label: '뷰포트당 UCS', value: '예', off: true },
  { label: 'UCS 이름', value: '' },
  { label: '비주얼 스타일', value: '2D 와이어프레임', off: true },
];

const pickIcons: { label: string; art: ReactNode }[] = [
  { label: 'Select group', art: <><path d="M1 1h16v16H1z" strokeDasharray="1.500 1.500" /><path d="M4 4h4v4H4z" fill="currentColor" /><path d="M10.500 4h4v4h-4zM4 10.500h4v4H4zM10.500 10.500h4v4h-4z" /></> },
  { label: 'Add to selection', art: <><path d="M4 1h13v13M1 4h13v13H1z" strokeDasharray="1.500 1.500" /><path d="M8 5v8M4 9h8" strokeWidth="2.500" /></> },
  { label: 'Pick', art: <><path d="M1 1h16v16H1z" strokeDasharray="1.500 1.500" /><path d="M6 4l7 6-3 .5 2 4-2 .5-1.500-4L6 13z" fill="currentColor" stroke="none" /></> },
  { label: 'Quick select', art: <path d="M17 1l-7 1-3 6 3 0-3 4 10-7h-4zM2 4l9 8-4 .5 2 4-2 1-2-4-3 3z" fill="currentColor" stroke="none" /> },
];

function PropertyTable() {
  return (
    <table className="w-full table-fixed border-separate border-spacing-0 text-[13px] leading-4">
      <colgroup>
        <col className="w-[19px]" />
        <col className="w-[118px]" />
        <col />
      </colgroup>
      <tbody>
        {props.map((p) =>
          p.head ? (
            <tr key={p.label} className="h-[19px]">
              <td className="p-0 pl-1.5"><OpenMark /></td>
              <th colSpan={2} className="p-0 pb-[3px] pl-1 text-left font-bold text-[#d0d0d0]">{p.label}</th>
            </tr>
          ) : (
            <tr key={p.label} className={clsx('h-[19px]', p.off ? 'text-[#7e7e7e]' : 'text-[#d0d0d0]')}>
              <td className="p-0" />
              <th className="overflow-hidden border-r border-b border-[#232524] bg-[#2a2b2b] p-0 pb-0.5 pl-1 text-left font-normal whitespace-nowrap">{p.label}</th>
              <td className="border-b border-[#232524] bg-[#2a2b2b] p-0 pb-0.5 pl-1 text-xs">
                <span className="flex items-center">
                  {p.mark === 'swatch' && <span className="mr-1.5 h-2.5 w-2.5 bg-white" />}
                  {p.mark === 'line' && <span className="mr-1.5 h-px w-[60px] bg-[#d0d0d0]" />}
                  {p.value}
                </span>
              </td>
            </tr>
          ),
        )}
      </tbody>
    </table>
  );
}

function RightDock() {
  return (
    <aside className="flex w-[273px] shrink-0 flex-col border-l border-black bg-[#242625]">
      <section className="flex h-[463px] flex-col">
        <PanelTitle>CAD View</PanelTitle>
        <ColumnHead />
        <Tree nodes={cadNodes} />
      </section>
      <section className="flex min-h-0 flex-1 flex-col border-t border-black">
        <PanelTitle>특성</PanelTitle>
        <div className="flex h-6 shrink-0">
          <label className="flex flex-1 items-center bg-[#1a1a1d] pr-2 pl-1">
            <select aria-label="Selection" className="min-w-0 flex-1 appearance-none bg-transparent pb-0.5 text-[13px] leading-4 text-[#b8b8b8] outline-none">
              <option>선택 요소가 없습니다.</option>
            </select>
            <Caret className="h-[5px] w-2" />
          </label>
          {pickIcons.map((p) => (
            <button key={p.label} aria-label={p.label} className="flex w-[25px] items-center justify-center border-l border-[#1a1a1b] text-[#e0e0e0]">
              <Icon size={16}>{p.art}</Icon>
            </button>
          ))}
        </div>
        <PropertyTable />
        <div className="ml-[19px] flex-1 bg-[#2a2b2b] pl-[117px]">
          <div className="h-full w-px bg-[#232524]" />
        </div>
      </section>
    </aside>
  );
}

export default function App() {
  return (
    <div className="flex h-screen flex-col overflow-hidden border border-[#7b7d7b] bg-[#1b1b1b] font-['Noto_Sans_CJK_KR',sans-serif]">
      <Header />
      <PropertyBar />
      <LibraryBar />
      <EditBar />
      <div className="flex min-h-0 flex-1">
        <LeftDock />
        <Workspace />
        <RightDock />
      </div>
      <div className="h-1 shrink-0 bg-[#2a2c2b]" />
    </div>
  );
}
